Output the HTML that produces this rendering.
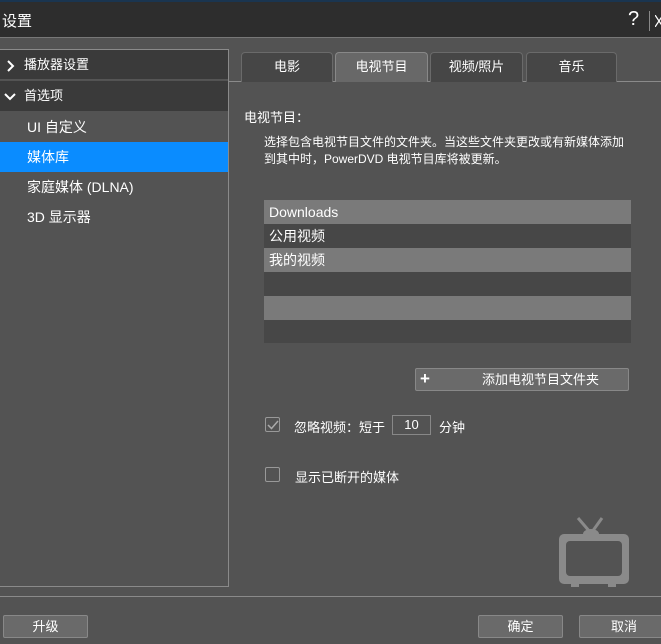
<!DOCTYPE html>
<html><head><meta charset="utf-8"><style>
*{margin:0;padding:0;box-sizing:border-box}
body{width:661px;height:644px;overflow:hidden;background:#535353;font-family:"Liberation Sans","Noto Sans CJK SC",sans-serif;color:#fff;position:relative;font-size:13px}
.a{position:absolute}
.title{left:0;top:0;width:661px;height:38px;background:#2d2d2d;border-top:2px solid #1a3550;border-bottom:1px solid #777}
.lp{left:0;top:49px;width:229px;height:538px;border:1px solid #8a8a8a;border-left:none}
.row{position:absolute;left:0;width:228px;height:30px;line-height:30px}
.tab{position:absolute;top:52px;height:30px;line-height:28px;text-align:center;background:#464646;border:1px solid #6a6a6a;border-bottom:none;border-radius:4px 4px 0 0;font-size:13px}
.btn{position:absolute;height:23px;line-height:21px;text-align:center;background:#6a6a6a;border:1px solid #888;border-radius:2px;font-size:13px}
.lr{position:absolute;left:264px;width:367px;height:24px;line-height:24px;padding-left:5px;font-size:14px}
.cb{position:absolute;width:15px;height:15px;border:1px solid #999;border-radius:2px}
</style></head><body>
<div class="a title"><span class="a" style="left:2px;top:8px;font-size:15px">设置</span>
<span class="a" style="left:628px;top:6px;font-size:20px">?</span>
<div class="a" style="left:649px;top:9px;width:1px;height:20px;background:#888"></div>
<svg class="a" style="left:655px;top:13px" width="6" height="12"><path d="M0 0 L8 12 M8 0 L0 12" stroke="#fff" stroke-width="1.3"/></svg></div>

<div class="a lp">
<div class="row" style="top:0;background:#3a3a3a;border-bottom:1px solid #555"><svg style="position:absolute;left:7px;top:10px" width="8" height="12"><path d="M1 1 L6 6 L1 11" stroke="#fff" stroke-width="2" fill="none"/></svg><span style="position:absolute;left:24px">播放器设置</span></div>
<div class="row" style="top:31px;background:#3a3a3a"><svg style="position:absolute;left:4px;top:12px" width="12" height="8"><path d="M1 1 L6 6 L11 1" stroke="#fff" stroke-width="2" fill="none"/></svg><span style="position:absolute;left:24px">首选项</span></div>
<div class="row" style="top:62px;font-size:14px"><span style="position:absolute;left:27px">UI 自定义</span></div>
<div class="row" style="top:92px;background:#0a8cff;font-size:14px"><span style="position:absolute;left:27px">媒体库</span></div>
<div class="row" style="top:122px;font-size:14px"><span style="position:absolute;left:27px">家庭媒体 (DLNA)</span></div>
<div class="row" style="top:152px;font-size:14px"><span style="position:absolute;left:27px">3D 显示器</span></div>
</div>

<div class="a" style="left:229px;top:81px;width:432px;height:1px;background:#8a8a8a"></div>
<div class="tab" style="left:241px;width:92px">电影</div>
<div class="tab" style="left:335px;width:93px;background:#686868;border-color:#888">电视节目</div>
<div class="tab" style="left:430px;width:93px">视频/照片</div>
<div class="tab" style="left:526px;width:91px">音乐</div>

<div class="a" style="left:244px;top:107px">电视节目：</div>
<div class="a" style="left:264px;top:134px;font-size:12px;line-height:17px;width:360px">选择包含电视节目文件的文件夹。当这些文件夹更改或有新媒体添加到其中时，PowerDVD 电视节目库将被更新。</div>

<div class="lr" style="top:200px;background:#7a7a7a">Downloads</div>
<div class="lr" style="top:224px;background:#474747">公用视频</div>
<div class="lr" style="top:248px;background:#7a7a7a">我的视频</div>
<div class="lr" style="top:272px;background:#474747"></div>
<div class="lr" style="top:296px;background:#7a7a7a"></div>
<div class="lr" style="top:320px;height:23px;background:#474747"></div>

<div class="btn" style="left:415px;top:368px;width:214px"><span style="position:absolute;left:4px;top:-1px;font-size:17px;font-weight:bold">+</span><span style="position:absolute;left:66px">添加电视节目文件夹</span></div>

<div class="cb" style="left:265px;top:417px"><svg style="position:absolute;left:1px;top:2px" width="12" height="10"><path d="M1 5 L4.5 8.5 L11 1" stroke="#aaa" stroke-width="1.5" fill="none"/></svg></div>
<div class="a" style="left:294px;top:417px">忽略视频：短于</div>
<div class="a" style="left:392px;top:415px;width:39px;height:20px;border:1px solid #888;text-align:center;line-height:18px">10</div>
<div class="a" style="left:439px;top:417px">分钟</div>
<div class="cb" style="left:265px;top:467px"></div>
<div class="a" style="left:295px;top:467px">显示已断开的媒体</div>

<svg class="a" style="left:558px;top:516px" width="72" height="72" viewBox="0 0 72 72">
<path d="M20 2 L32 16 M44 2 L34 16" stroke="#8a8a8a" stroke-width="3"/>
<ellipse cx="33" cy="18" rx="8" ry="5" fill="#8a8a8a"/>
<rect x="1" y="18" width="70" height="50" rx="5" fill="#8a8a8a"/>
<rect x="8" y="25" width="56" height="35" rx="4" fill="#535353"/>
<rect x="13" y="66" width="8" height="5" fill="#8a8a8a"/><rect x="50" y="66" width="8" height="5" fill="#8a8a8a"/>
</svg>

<div class="a" style="left:0;top:596px;width:661px;height:1px;background:#8a8a8a"></div>
<div class="btn" style="left:3px;top:615px;width:85px">升级</div>
<div class="btn" style="left:478px;top:615px;width:85px">确定</div>
<div class="btn" style="left:579px;top:615px;width:90px">取消</div>
</body></html>
